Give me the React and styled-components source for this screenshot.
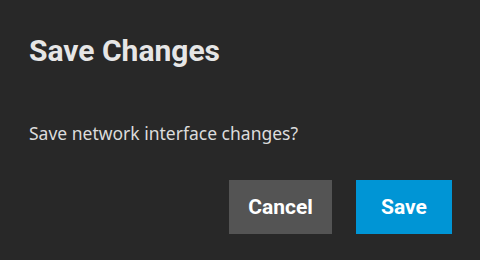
import React from 'react';
import styled, { createGlobalStyle } from 'styled-components';

const Global = createGlobalStyle`
  html, body {
    margin: 0;
    padding: 0;
    background: #282828;
  }
`;

const Dialog = styled.div`
  width: 480px;
  height: 260px;
  box-sizing: border-box;
  background: #282828;
  padding: 32px 28px 26px 29px;
  display: flex;
  flex-direction: column;
`;

const Title = styled.h1`
  margin: 0;
  font-family: Roboto, sans-serif;
  font-weight: 700;
  font-size: 30px;
  line-height: 38px;
  color: #e6e6e6;
`;

const Message = styled.p`
  margin: 52px 0 0;
  font-family: "Noto Sans", sans-serif;
  font-size: 17.5px;
  line-height: 22px;
  color: #dcdcdc;
`;

const Actions = styled.div`
  margin-top: auto;
  display: flex;
  justify-content: flex-end;
  gap: 24px;
`;

const Button = styled.button`
  border: none;
  height: 54px;
  width: ${p => p.$w}px;
  padding: 0;
  background: ${p => p.$primary ? '#0095d5' : '#545454'};
  color: #ffffff;
  font-family: Roboto, sans-serif;
  font-weight: 700;
  font-size: 21px;
  cursor: pointer;
`;

export default function App() {
  return (
    <>
      <Global />
      <Dialog>
        <Title>Save Changes</Title>
        <Message>Save network interface changes?</Message>
        <Actions>
          <Button $w={103}>Cancel</Button>
          <Button $primary $w={96}>Save</Button>
        </Actions>
      </Dialog>
    </>
  );
}
